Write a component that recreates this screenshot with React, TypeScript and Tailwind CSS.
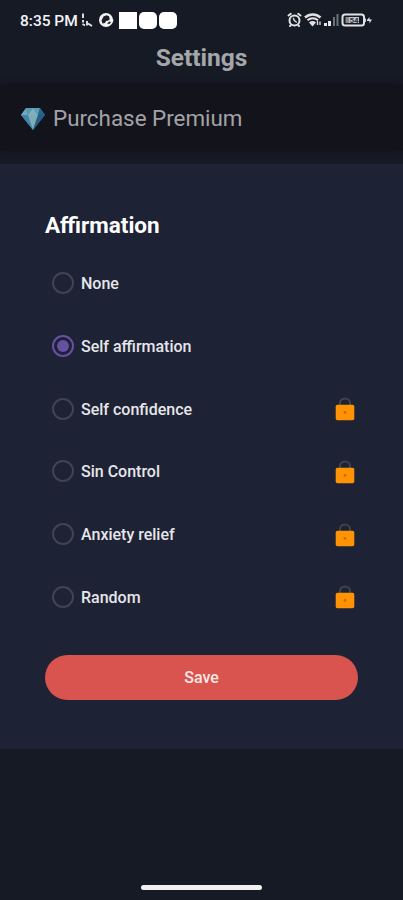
import React, { useState } from 'react';

const options = [
  { label: "None", locked: false },
  { label: "Self affirmation", locked: false },
  { label: "Self confidence", locked: true },
  { label: "Sin Control", locked: true },
  { label: "Anxiety relief", locked: true },
  { label: "Random", locked: true },
]

const StatusBar: React.FC = () => {
  return (
    <div className="flex h-10 items-center justify-between pl-[20px] pr-[30px] text-[#f4f4f6]">
      <div className="flex items-center">
        <span className="w-[59px] whitespace-nowrap pt-px text-[15.5px] font-medium leading-5">8:35 PM</span>
        <svg className="ml-[2px]" width="12" height="16" viewBox="0 0 12 16" fill="none" stroke="#e4e4e8" strokeWidth="1.9">
          <path d="M2 1.500v4.500M2 8v2.500M1.500 12l2.500 1.500M6 9v4.500M7 11.500l4 2.500" />
        </svg>
        <svg className="ml-[5px]" width="17" height="16" viewBox="0 0 17 16">
          <circle cx="8" cy="8" r="7" fill="#f4f4f6" />
          <path d="M5.500 4.500l3-1.200 2.500 1 .8 3-1.800 1.400-2 .3-1 2-2.500.5-1-3z" fill="#1b1e28" />
          <path d="M9 11.500l2.500-2 1.500.5-1.500 2z" fill="#1b1e28" />
          <path d="M12 4l3.500 4-1 3-2-3z" fill="#f4f4f6" />
        </svg>
        <div className="ml-[4px] flex gap-[2px]">
          <div className="h-[17px] w-[18px] bg-white" />
          <div className="h-[17px] w-[18px] rounded-[5px] bg-white" />
          <div className="h-[17px] w-[18px] rounded-[5px] bg-white" />
        </div>
      </div>
      <div className="flex items-center">
        <svg width="15" height="16" viewBox="0 0 15 16" fill="none" stroke="#e2e2e5" strokeLinecap="round">
          <circle cx="7.500" cy="8.500" r="5" strokeWidth="2" />
          <path d="M1.500 3.500L3.800 1.800M13.500 3.500L11.200 1.800M3.500 13.500l-.5.500M11.500 13.500l.5.500" strokeWidth="2" />
          <path d="M6.500 6.500l.8 2 2 1.500" strokeWidth="1.400" />
        </svg>
        <svg className="ml-[2px]" width="18" height="16" viewBox="0 0 18 16" fill="none" stroke="#e2e2e5">
          <path d="M1 5.500a11.500 11.500 0 0 1 15.500 0" strokeWidth="2.600" />
          <path d="M3.500 8.300a8 8 0 0 1 10.500 0" strokeWidth="2" />
          <path d="M5 10.500a5.500 5.500 0 0 1 7 0L8.500 14.500z" fill="#e2e2e5" stroke="none" />
          <path d="M13.500 9v4M16 9.500v3.500" strokeWidth="1.300" />
        </svg>
        <svg className="ml-[2px]" width="17" height="14" viewBox="0 0 17 14">
          <path d="M0 10h3v3H0zM4 8h3v5H4z" fill="#e8e8eb" />
          <path d="M9 4h2v9H9zM12.500 1h2v12h-2z" fill="#6d7079" />
        </svg>
        <svg width="32" height="16" viewBox="0 0 32 16" fill="none" stroke="#e2e2e5">
          <rect x="1.500" y="2.500" width="21.500" height="11" rx="2.500" strokeWidth="2" />
          <rect x="4.500" y="5" width="3" height="6" fill="#858891" stroke="none" />
          <rect x="7.500" y="5" width="10.500" height="6" fill="#c4c5c9" stroke="none" />
          <text x="8.500" y="11" fontSize="8" fontWeight="700" fill="#30333d" stroke="none">54</text>
          <path d="M24 6.500v3.500" strokeWidth="1.800" />
          <path d="M26 8l2.500-3v2.500H31L28.500 11.500V9H26z" fill="#e2e2e5" stroke="none" />
        </svg>
      </div>
    </div>
  );
};

const Diamond: React.FC = () => {
  return (
    <svg width="26" height="24" viewBox="0 0 26 24">
      <path d="M6 1h14l5 7-12 15L1 8z" fill="#397e9f" />
      <path d="M6 1L1 8h7z" fill="#75a5b8" />
      <path d="M6 1h7L8 8z" fill="#5a9bb5" />
      <path d="M13 1L8 8h10z" fill="#82b0bc" />
      <path d="M13 1h7l-2 7z" fill="#5c9fb8" />
      <path d="M20 1l5 7h-7z" fill="#286487" />
      <path d="M1 8h7l5 15z" fill="#3f86aa" />
      <path d="M8 8h10l-5 15z" fill="#80adb5" />
      <path d="M18 8h7L13 23z" fill="#245f88" />
    </svg>
  );
};

const Lock: React.FC = () => {
  return (
    <svg className="mt-px" width="20" height="24" viewBox="0 0 20 24">
      <path d="M5 9V6a5 4.500 0 0 1 10 0v3" fill="none" stroke="#40424c" strokeWidth="2" />
      <rect x="0.700" y="7.700" width="18.600" height="15.600" rx="1.800" fill="#ff9205" />
      <circle cx="10" cy="15.500" r="1.400" fill="#c96c0b" />
    </svg>
  );
};

const App: React.FC = () => {

  const [selected, setSelected] = useState("Self affirmation")

  return (
    <div className="flex h-[900px] w-full flex-col bg-[#161a25] font-[Roboto,sans-serif]">
      <StatusBar />
      <h1 className="h-11 text-center text-[24.5px] font-bold leading-9 text-[#a5a6aa]">Settings</h1>
      <div className="flex h-[67px] items-center bg-[#13131b] pl-[20px] pt-[3px] shadow-[0_0_6px_#13131b]">
        <Diamond />
        <span className="ml-[7px] text-[22.4px] text-[#a3a3a7]">Purchase Premium</span>
      </div>
      <div className="mt-[13px] h-[585px] bg-[#1e2235] px-[45px] pt-[44px]">
        <h2 className="h-[44px] text-[22.5px] font-bold leading-[34px] text-white">Affirmation</h2>
        <div className="flex flex-col">
          {options.map((option) => (
            <button
              key={option.label}
              className="flex h-[62.7px] w-full items-center pl-[7px] pr-[3px] text-left"
              onClick={() => !option.locked && setSelected(option.label)}
            >
              {selected === option.label ? (
                <span className="flex h-[22px] w-[22px] items-center justify-center rounded-full border-2 border-[#6750a4]">
                  <span className="h-3 w-3 rounded-full bg-[#6750a4]" />
                </span>
              ) : (
                <span className="h-[22px] w-[22px] rounded-full border-2 border-[#41434f]" />
              )}
              <span className="ml-[7px] flex-1 pt-[2px] text-[16px] font-medium text-[#e6e6ea]">{option.label}</span>
              {option.locked && <Lock />}
            </button>
          ))}
        </div>
        <button className="mt-[27px] h-[45px] w-full rounded-full bg-[#d9544f] pt-px text-[16px] font-medium text-[#fbe9e8]">Save</button>
      </div>
      <div className="mx-auto mb-[10px] mt-auto h-[5px] w-[121px] rounded-full bg-[#f1f1f1]" />
    </div>
  );
};

export default App;
